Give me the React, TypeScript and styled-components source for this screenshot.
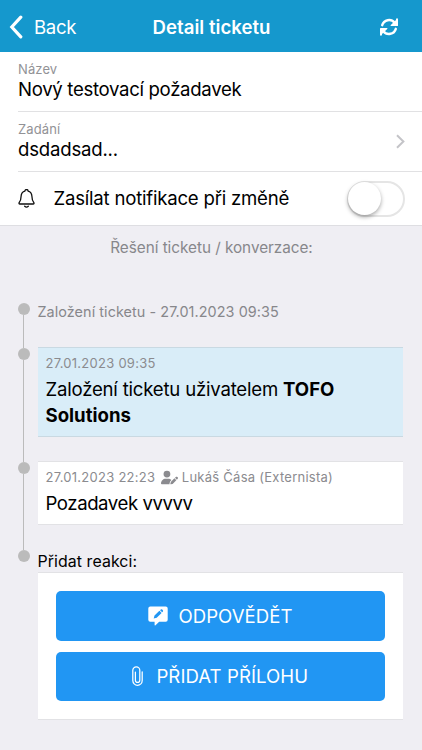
import React from "react";
import styled, { createGlobalStyle, css } from "styled-components";
import { FaUserPen } from "react-icons/fa6";

const GlobalStyle = createGlobalStyle`
  * { box-sizing: border-box; }
  body {
    margin: 0;
    background: #efeef3;
    color: #000;
    font-family: Inter, "Noto Sans", sans-serif;
    font-size: 18.6px;
  }
  svg { display: block; flex: none; }
`;

const Page = styled.div`
  display: flex;
  flex-direction: column;
  width: 422px;
  height: 750px;
  overflow: hidden;
  background: #efeef3;
`;

const Navbar = styled.header`
  display: grid;
  grid-template-columns: 1fr auto 1fr;
  align-items: center;
  flex: none;
  height: 52px;
  padding: 2px 24px 0 9px;
  background: #1598cd;
  color: #fff;
`;

const BackLink = styled.a`
  display: flex;
  align-items: center;
  gap: 11px;
  letter-spacing: -0.35px;
`;

const NavTitle = styled.h1`
  margin: 0;
  padding-left: 16px;
  font-size: 18.6px;
  font-weight: 600;
  letter-spacing: 0.03px;
`;

const RefreshButton = styled.a`
  justify-self: end;
`;

const List = styled.ul`
  margin: 0;
  padding: 0 0 0 18px;
  list-style: none;
  background: #fff;
  border-bottom: 1px solid #dedee2;
`;

const Field = styled.li`
  display: flex;
  align-items: center;
  justify-content: space-between;
  height: 60px;
  padding: 0 17px 0 0;
  border-bottom: 1px solid #e1e1e3;
`;

const FieldText = styled.div`
  padding-bottom: 2px;
`;

const FieldLabel = styled.div`
  font-size: 13px;
  line-height: 16px;
  letter-spacing: 0.1px;
  color: #929296;
`;

const FieldValue = styled.div<{ $tracking: number }>`
  line-height: 24px;
  letter-spacing: ${(p) => p.$tracking}px;
`;

const ToggleRow = styled.li`
  display: flex;
  align-items: center;
  height: 53px;
  padding-right: 17px;
`;

const ToggleLabel = styled.span`
  flex: 1;
  margin-left: 18.5px;
  padding-bottom: 2px;
  letter-spacing: -0.22px;
`;

const Toggle = styled.span`
  display: flex;
  width: 58px;
  height: 36px;
  border: 2px solid #e5e5e5;
  border-radius: 18px;
`;

const Knob = styled.span`
  width: 33px;
  height: 33px;
  margin: -0.5px 0 0 -1px;
  border-radius: 50%;
  background: #fff;
  box-shadow: 0 2px 4px rgba(0, 0, 0, 0.35);
`;

const SectionTitle = styled.h2`
  margin: 12px 0 0;
  padding-left: 1px;
  font-size: 15.3px;
  font-weight: 400;
  line-height: 20px;
  letter-spacing: -0.03px;
  text-align: center;
  color: #87878b;
`;

const Timeline = styled.ol`
  display: flex;
  flex-direction: column;
  margin: 45px 19px 0 18px;
  padding: 0;
  list-style: none;
`;

const TimelineItem = styled.li<{ $height: number }>`
  display: flex;
  align-items: stretch;
  gap: 7.5px;
  min-height: ${(p) => p.$height}px;
`;

const Rail = styled.div<{ $last?: boolean }>`
  display: flex;
  flex-direction: column;
  align-items: center;
  flex: none;
  width: 12px;

  &::before {
    content: "";
    flex: none;
    width: 12px;
    height: 12px;
    border-radius: 50%;
    background: #bbbbbb;
  }

  &::after {
    content: "";
    flex: 1;
    width: 1px;
    margin-right: 1px;
    background: ${(p) => (p.$last ? "transparent" : "#bbbbbb")};
  }
`;

const ItemBody = styled.div`
  flex: 1;
  min-width: 0;
`;

const StatusText = styled.div`
  font-size: 14.4px;
  line-height: 18px;
  letter-spacing: 0.07px;
  color: #87878b;
`;

const ReplyTitle = styled.div`
  height: 22px;
  font-size: 15.9px;
  line-height: 24px;
  letter-spacing: 0.08px;
`;

const panel = css`
  border: solid #e2e2e5;
  border-width: 1px 0;
`;

const Message = styled.article<{ $own?: boolean }>`
  ${panel}
  margin-top: -1px;
  padding: 7px 8px;
  background: ${(p) => (p.$own ? "#d9edf8" : "#fff")};
  border-color: ${(p) => (p.$own ? "#c9d9e2" : "#e2e2e5")};
`;

const Meta = styled.div`
  display: flex;
  align-items: center;
  height: 16px;
  margin-bottom: 5px;
  font-size: 13px;
  line-height: 16px;
  letter-spacing: 0.26px;
  white-space: nowrap;
  color: #8b8b8f;

  svg { margin: 0 4px 0 5.5px; }
`;

const MessageText = styled.p<{ $tracking: number }>`
  margin: 0;
  padding-bottom: 1px;
  line-height: 26px;
  letter-spacing: ${(p) => p.$tracking}px;

  b { letter-spacing: 0; }
`;

const Actions = styled.div`
  ${panel}
  display: flex;
  flex-direction: column;
  gap: 11px;
  height: 148px;
  padding: 18px;
  background: #fff;
`;

const ActionButton = styled.button<{ $gap: number }>`
  display: flex;
  align-items: center;
  justify-content: center;
  gap: ${(p) => p.$gap}px;
  flex: 1;
  padding: 0;
  border: 0;
  border-radius: 5px;
  background: #2196f3;
  color: #fff;
  font: inherit;
  letter-spacing: 0.06px;
`;

const BackIcon = () => (
  <svg width="14" height="24" viewBox="0 0 14 24" fill="none" stroke="#fff" strokeWidth="3.2" strokeLinecap="round" strokeLinejoin="miter">
    <path d="M11.8 2.2 2.8 12l9 9.8" />
  </svg>
);

const RefreshIcon = () => (
  <svg width="18" height="18" viewBox="0 0 18 18">
    <g fill="none" stroke="#fff" strokeWidth="2.4" strokeLinecap="round">
      <path d="M2.2 7.2A7.1 7.1 0 0 1 14.6 4.8" />
      <path d="M15.8 10.8A7.1 7.1 0 0 1 3.4 13.2" />
    </g>
    <path fill="#fff" d="M17.1.3q.9 0 .9.9v6.200q0 .7-.8.7h-5.900q-1.500 0-.5-1L16 2V.9q.3-.6 1.100-.6ZM.9 17.700q-.9 0-.9-.9v-6.200q0-.7.8-.7h5.900q1.500 0 .5 1L2 16v1.100q-.3.6-1.100.6Z" />
  </svg>
);

const ChevronIcon = () => (
  <svg width="9" height="15" viewBox="0 0 9 15" fill="none" stroke="#c4c4c8" strokeWidth="2">
    <path d="M1 1.2 7.4 7.5 1 13.8" />
  </svg>
);

const BellIcon = () => (
  <svg width="17" height="19" viewBox="0 0 17 19" fill="none" stroke="#111" strokeWidth="1.3" strokeLinejoin="round" strokeLinecap="round">
    <path d="M6.9 2.1a1.6 1.6 0 0 1 3.2 0c2.5.7 3.7 2.6 3.8 5.2.1 3.6.5 4.5 1.8 6.1.5.7.4 1.6-.6 1.6H1.9c-1 0-1.100-.9-.6-1.600 1.300-1.600 1.700-2.500 1.800-6.100.1-2.600 1.300-4.500 3.800-5.200Z" />
    <path d="M6.7 17.3q1.8 1.7 3.6 0" />
  </svg>
);

const ReplyIcon = () => (
  <svg width="20" height="20" viewBox="0 0 20 20">
    <path fill="#fff" d="M2.3.5h15.400a2 2 0 0 1 2 2v11.200a2 2 0 0 1-2 2h-6.500l-3.700 3.500q-.9.7-.9-.4v-3.100H2.300a2 2 0 0 1-2-2V2.500a2 2 0 0 1 2-2Z" />
    <path fill="#2196f3" d="m5.700 12.500.8-3 4.900-4.700 2.200 2.200-4.900 4.700-3 .8Zm6.400-8.300.7-.7q.7-.5 1.400.1l.7.7q.5.7-.1 1.400l-.7.6-2-2.100Z" />
  </svg>
);

const ClipIcon = () => (
  <svg width="11" height="20" viewBox="0 0 11 20" fill="none" stroke="#fff" strokeWidth="1.25" strokeLinecap="round">
    <path d="M10.200 5.800v8.800a4.700 4.700 0 0 1-9.400 0V4.300a3.500 3.500 0 0 1 7 0v9.900a2.200 2.200 0 0 1-4.400 0V6.100" />
  </svg>
);

export default function App() {
  return (
    <Page>
      <GlobalStyle />
      <Navbar>
        <BackLink><BackIcon />Back</BackLink>
        <NavTitle>Detail ticketu</NavTitle>
        <RefreshButton aria-label="Refresh"><RefreshIcon /></RefreshButton>
      </Navbar>

      <List>
        <Field>
          <FieldText>
            <FieldLabel>Název</FieldLabel>
            <FieldValue $tracking={-0.32}>Nový testovací požadavek</FieldValue>
          </FieldText>
        </Field>
        <Field>
          <FieldText>
            <FieldLabel>Zadání</FieldLabel>
            <FieldValue $tracking={-0.2}>dsdadsad...</FieldValue>
          </FieldText>
          <ChevronIcon />
        </Field>
        <ToggleRow>
          <BellIcon />
          <ToggleLabel>Zasílat notifikace při změně</ToggleLabel>
          <Toggle role="switch" aria-checked={false}><Knob /></Toggle>
        </ToggleRow>
      </List>

      <SectionTitle>Řešení ticketu / konverzace:</SectionTitle>

      <Timeline>
        <TimelineItem $height={45}>
          <Rail />
          <ItemBody>
            <StatusText>Založení ticketu - 27.01.2023 09:35</StatusText>
          </ItemBody>
        </TimelineItem>
        <TimelineItem $height={114}>
          <Rail />
          <ItemBody>
            <Message $own>
              <Meta>27.01.2023 09:35</Meta>
              <MessageText $tracking={-0.21}>
                Založení ticketu uživatelem <b>TOFO Solutions</b>
              </MessageText>
            </Message>
          </ItemBody>
        </TimelineItem>
        <TimelineItem $height={88}>
          <Rail />
          <ItemBody>
            <Message>
              <Meta>27.01.2023 22:23<FaUserPen size={17} /> Lukáš Čása (Externista)</Meta>
              <MessageText $tracking={-0.43}>Pozadavek vvvvv</MessageText>
            </Message>
          </ItemBody>
        </TimelineItem>
        <TimelineItem $height={170}>
          <Rail $last />
          <ItemBody>
            <ReplyTitle>Přidat reakci:</ReplyTitle>
            <Actions>
              <ActionButton $gap={10.5}><ReplyIcon />ODPOVĚDĚT</ActionButton>
              <ActionButton $gap={13}><ClipIcon />PŘIDAT PŘÍLOHU</ActionButton>
            </Actions>
          </ItemBody>
        </TimelineItem>
      </Timeline>
    </Page>
  );
}
